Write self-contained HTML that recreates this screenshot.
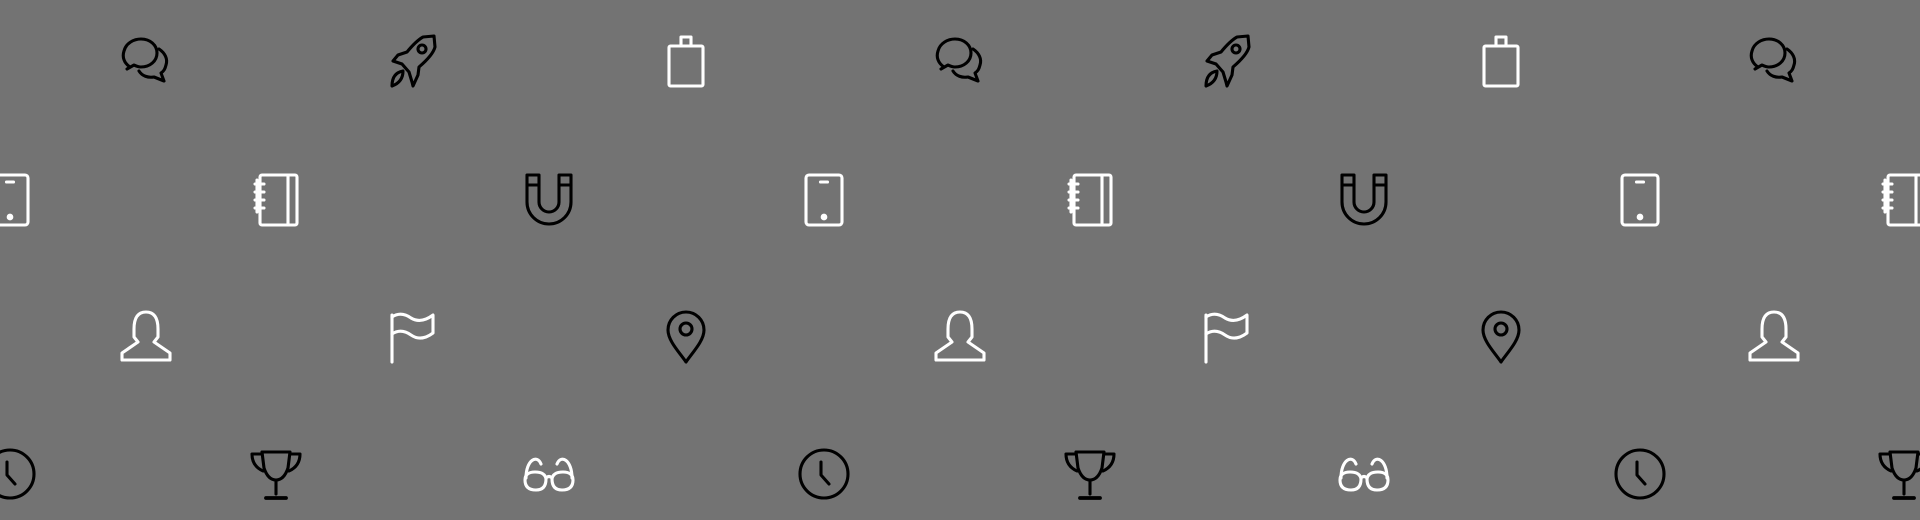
<!DOCTYPE html>
<html><head><meta charset="utf-8"><style>
html,body{margin:0;padding:0;background:#737373;width:1920px;height:520px;overflow:hidden}
svg{display:block}
.b{stroke:#000;color:#000}.w{stroke:#fff;color:#fff}
g.i path,g.i circle,g.i rect,g.i ellipse,g.i line{fill:none;stroke-width:3.1;stroke-linejoin:round;stroke-linecap:round}
</style></head><body>
<svg width="1920" height="520" viewBox="0 0 1920 520" xmlns="http://www.w3.org/2000/svg">
<defs>
<g id="chat" class="i">
<path d="M-16,6 C-22,2 -24,-4 -22,-10 C-20,-18 -12,-22 -5,-22 C4,-22 11,-16 11,-8 C11,0 4,6 -5,6 C-8,6 -10,5 -12,4 L-19,8 Z"/>
<path d="M13,-12 C19,-8 22,-2 20,4 C19,8 18,10 15,12 L18,20 L8,16 C2,17 -4,15 -7,10"/>
</g>
<g id="rocket" class="i">
<path d="M21,-25 L10,-24 Q3,-20 -6,-9 L-15,-6 L-20,0 L-11,3 L-4,11 L-1,21 L0,25 L5,14 L6,6 Q20,-6 22,-14 Z"/>
<circle cx="9" cy="-12" r="4"/>
<path d="M-21,25 Q-21,12 -10,10 Q-10,21 -21,25 Z"/>
</g>
<g id="bag" class="i">
<rect x="-17" y="-15" width="34" height="40" rx="1.5"/>
<path d="M-5,-15 L-5,-24 L5,-24 L5,-15"/>
</g>
<g id="tablet" class="i">
<rect x="-18" y="-25" width="36" height="50" rx="3"/>
<line x1="-3.5" y1="-18" x2="3.5" y2="-18"/>
<circle cx="0" cy="17" r="1.8" style="fill:currentColor"/>
</g>
<g id="note" class="i">
<rect x="-16" y="-25" width="37" height="50" rx="2"/>
<line x1="12" y1="-25" x2="12" y2="25"/>
<path d="M-21,-16 L-12,-16 M-21,-8 L-12,-8 M-21,0 L-12,0 M-21,8 L-12,8 M-19,-20 L-19,12"/>
</g>
<g id="magnet" class="i">
<path d="M-22,-25 L-22,2 A22,22 0 0 0 22,2 L22,-25 L10,-25 L10,2 A10,10 0 0 1 -10,2 L-10,-25 Z"/>
<path d="M-22,-15 L-10,-15 M10,-15 L22,-15"/>
</g>
<g id="person" class="i">
<path d="M0,-25 C-10,-25 -12,-16 -12,-8 L-12,0 L-8,5 L-24,16 L-24,23 L24,23 L24,16 L8,5 L12,0 L12,-8 C12,-16 10,-25 0,-25 Z"/>
</g>
<g id="flag" class="i">
<path d="M-21,-22 L-21,25"/>
<path d="M-21,-20 Q-12,-26 -2,-19 Q8,-13 20,-22 L20,-4 Q8,5 -2,-2 Q-12,-9 -21,-3"/>
</g>
<g id="pin" class="i">
<path d="M0,25 C-6,16 -18,4 -18,-7 A18,18 0 0 1 18,-7 C18,4 6,16 0,25 Z"/>
<circle cx="0" cy="-8" r="6"/>
</g>
<g id="clock" class="i">
<circle cx="0" cy="0" r="24"/>
<path d="M-3,-12 L-3,1 L5,10"/>
</g>
<g id="trophy" class="i">
<path d="M-14,-22 L14,-22 L12,-6 Q8,6 0,6 Q-8,6 -12,-6 Z"/>
<path d="M-14,-20 L-24,-20 Q-24,-8 -13,-3 M14,-20 L24,-20 Q24,-8 13,-3"/>
<path d="M0,6 L0,20"/>
<path d="M-10,24 L10,24" style="stroke-width:3.8"/>
</g>
<g id="glass" class="i">
<path d="M-24,6 Q-24,-2 -14,-2 Q-4,-2 -3,5 Q-3,16 -13,16 Q-24,16 -24,6 Z"/>
<path d="M24,6 Q24,-2 14,-2 Q4,-2 3,5 Q3,16 13,16 Q24,16 24,6 Z"/>
<path d="M-3,4 Q0,1 3,4"/>
<path d="M-23,4 C-23,-14 -12,-20 -8,-10 M23,4 C23,-14 12,-20 8,-10"/>
</g>
</defs>
<use href="#chat" class="b" x="146" y="61"/>
<use href="#rocket" class="b" x="413" y="61"/>
<use href="#bag" class="w" x="686" y="61"/>
<use href="#chat" class="b" x="960" y="61"/>
<use href="#rocket" class="b" x="1227" y="61"/>
<use href="#bag" class="w" x="1501" y="61"/>
<use href="#chat" class="b" x="1774" y="61"/>
<use href="#tablet" class="w" x="10" y="200"/>
<use href="#note" class="w" x="276" y="200"/>
<use href="#magnet" class="b" x="549" y="200"/>
<use href="#tablet" class="w" x="824" y="200"/>
<use href="#note" class="w" x="1090" y="200"/>
<use href="#magnet" class="b" x="1364" y="200"/>
<use href="#tablet" class="w" x="1640" y="200"/>
<use href="#note" class="w" x="1904" y="200"/>
<use href="#person" class="w" x="146" y="337"/>
<use href="#flag" class="w" x="413" y="337"/>
<use href="#pin" class="b" x="686" y="337"/>
<use href="#person" class="w" x="960" y="337"/>
<use href="#flag" class="w" x="1227" y="337"/>
<use href="#pin" class="b" x="1501" y="337"/>
<use href="#person" class="w" x="1774" y="337"/>
<use href="#clock" class="b" x="10" y="474"/>
<use href="#trophy" class="b" x="276" y="474"/>
<use href="#glass" class="w" x="549" y="474"/>
<use href="#clock" class="b" x="824" y="474"/>
<use href="#trophy" class="b" x="1090" y="474"/>
<use href="#glass" class="w" x="1364" y="474"/>
<use href="#clock" class="b" x="1640" y="474"/>
<use href="#trophy" class="b" x="1904" y="474"/>
</svg>
</body></html>
